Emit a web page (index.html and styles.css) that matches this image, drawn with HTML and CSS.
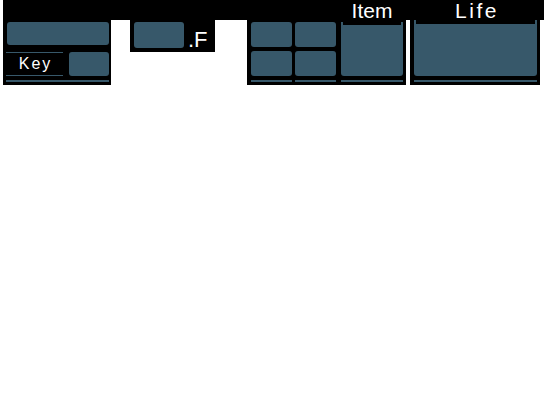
FILE: index.html
```html
<!DOCTYPE html>
<html lang="en">
<head>
    <meta charset="UTF-8">
    <meta name="viewport" content="width=device-width, initial-scale=1.0">
    <title>HUD</title>
    <link rel="stylesheet" href="styles.css">
</head>
<body>
    <div class="hud">
        <section class="panel panel-key">
            <div class="slot slot-wide"></div>
            <div class="key-row">
                <div class="key-label">Key</div>
                <div class="slot slot-key"></div>
            </div>
            <div class="rule"></div>
        </section>

        <section class="panel panel-f">
            <div class="slot slot-f"></div>
            <span class="f-label">.F</span>
        </section>

        <section class="panel panel-item">
            <div class="item-cols item-head">
                <div class="title item-title">Item</div>
            </div>
            <div class="item-cols item-grid">
                <div class="slot"></div>
                <div class="slot"></div>
                <div class="slot"></div>
                <div class="slot"></div>
                <div class="slot slot-big tabbed"></div>
            </div>
            <div class="item-cols item-rules">
                <div class="rule"></div>
                <div class="rule"></div>
                <div class="rule rule-big"></div>
            </div>
        </section>

        <section class="panel panel-life">
            <div class="title life-title">Life</div>
            <div class="slot slot-life tabbed"></div>
            <div class="rule"></div>
        </section>
    </div>
</body>
</html>
```

FILE: styles.css
```css
body {
    margin: 0;
    background-color: #fff;
    font-family: "Liberation Sans", Arial, sans-serif;
    color: #fff;
}
.hud {
    display: flex;
    align-items: flex-start;
    margin-left: 3px;
    background: linear-gradient(#000 0 20px, transparent 20px);
}
.panel {
    background-color: #000;
    box-sizing: border-box;
}
.slot {
    background-color: #37586a;
    border-radius: 3px;
}
.rule {
    height: 2px;
    background-color: #37586a;
}
.title {
    font-size: 21px;
    line-height: 22px;
    height: 20px;
    text-align: center;
}

/* key panel */
.panel-key {
    width: 108px;
    height: 85px;
    margin-right: 19px;
    padding: 22px 2px 0 3px;
}
.slot-wide {
    height: 23px;
    margin-left: 1px;
}
.key-row {
    display: flex;
    height: 24px;
    margin-top: 7px;
}
.key-label {
    width: 57px;
    box-sizing: border-box;
    border-top: 1px solid #37586a;
    border-bottom: 1px solid #37586a;
    padding-left: 2px;
    font-size: 16px;
    line-height: 22px;
    letter-spacing: 2px;
    text-align: center;
}
.slot-key {
    width: 40px;
    margin-left: 6px;
}
.panel-key .rule {
    margin-top: 4px;
}

/* .F panel */
.panel-f {
    display: flex;
    align-items: flex-start;
    width: 85px;
    height: 52px;
    margin-right: 32px;
    padding: 22px 0 0 4px;
}
.slot-f {
    width: 50px;
    height: 26px;
}
.f-label {
    margin-left: 4px;
    padding-top: 5px;
    font-size: 22px;
    line-height: 26px;
}

/* item panel */
.panel-item {
    width: 159px;
    height: 85px;
    margin-right: 4px;
    padding: 0 3px 0 4px;
}
.item-cols {
    display: grid;
    grid-template-columns: 41px 41px 64px;
    column-gap: 3px;
}
.item-head {
    height: 20px;
}
.item-title {
    grid-column: 3;
    padding-left: 2px;
}
.item-grid {
    grid-template-rows: 25px 25px;
    row-gap: 4px;
    margin-top: 2px;
}
.slot-big {
    grid-column: 3;
    grid-row: 1 / 3;
    margin-left: 2px;
}
.item-rules {
    margin-top: 4px;
}
.rule-big {
    margin-left: 2px;
}

/* life panel */
.panel-life {
    width: 130px;
    height: 85px;
    padding: 0 3px 0 4px;
}
.life-title {
    padding-left: 3px;
    letter-spacing: 2.5px;
}
.slot-life {
    height: 56px;
}
.panel-life .rule {
    margin-top: 4px;
}

/* notched top edge on the tall slots */
.tabbed {
    position: relative;
    border-radius: 0 0 3px 3px;
}
.tabbed::before {
    content: "";
    position: absolute;
    top: 0;
    left: 2px;
    right: 2px;
    height: 3px;
    background-color: #000;
}
.slot-life::before {
    height: 4px;
}
```
